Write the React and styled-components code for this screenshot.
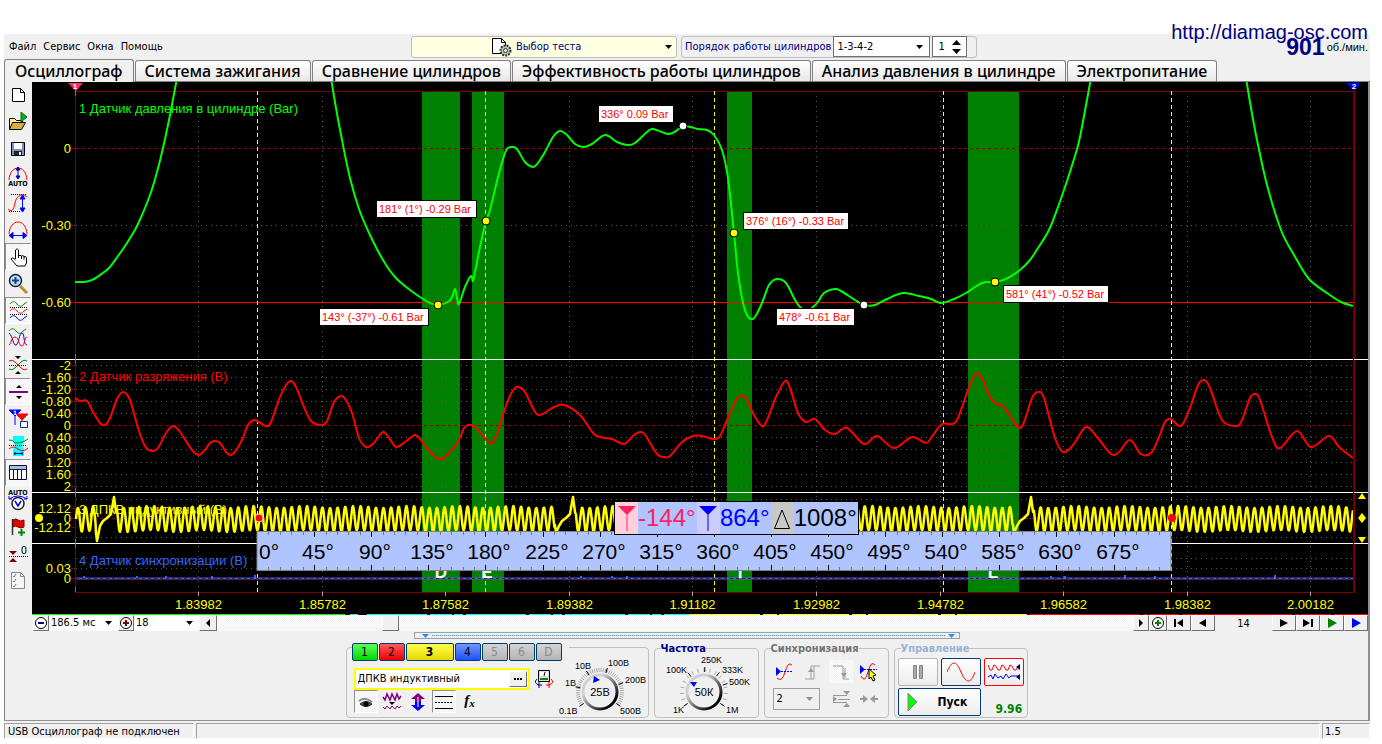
//react and styled components
import { useState } from "react";
import styled, { createGlobalStyle, css } from "styled-components";

const uiFont = `"DejaVu Sans Condensed", "DejaVu Sans", "Noto Sans", sans-serif`;
const plotFont = `"Liberation Sans", "DejaVu Sans", sans-serif`;

//#### PLOT DATA ####
const pressure = [
  [[75, 282], [84, 282], [92, 280], [100, 275], [109, 268], [118, 256], [127, 243], [138, 224], [150, 195], [157, 172], [163, 148], [170, 115], [177, 78]],
  [[331, 78], [336, 108], [342, 140], [350, 178], [359, 209], [370, 235], [383, 260], [395, 277], [410, 290], [423, 299], [430, 303], [438, 305], [448, 302], [452, 297], [455, 289], [457, 298], [459, 304], [465, 287], [471, 276], [473, 281], [476, 267], [480, 247], [486, 221], [490, 210], [498, 177], [505, 153], [508, 148], [512, 147], [517, 149], [525, 162], [533, 167], [538, 163], [545, 152], [553, 137], [560, 131], [567, 135], [575, 144], [583, 147], [592, 144], [605, 135], [617, 142], [627, 145], [635, 143], [647, 132], [653, 129], [668, 134], [676, 131], [683, 126], [690, 127], [698, 129], [707, 130], [714, 135], [722, 150], [728, 178], [734, 233], [738, 273], [743, 303], [747, 315], [751, 319], [755, 317], [762, 303], [769, 285], [777, 279], [786, 283], [794, 298], [800, 307], [807, 311], [813, 307], [818, 302], [824, 293], [835, 289], [841, 291], [855, 300], [864, 305], [875, 305], [887, 299], [903, 293], [919, 296], [931, 299], [941, 303], [954, 299], [966, 293], [982, 283], [995, 282], [1006, 279], [1020, 270], [1030, 260], [1038, 248], [1049, 230], [1058, 207], [1066, 184], [1074, 159], [1080, 137], [1091, 78]],
  [[1246, 78], [1251, 108], [1257, 140], [1267, 185], [1281, 230], [1294, 255], [1309, 279], [1327, 293], [1341, 302], [1353, 306]],
];

const vacuum = [
  [75, 398], [80, 401], [87, 401], [93, 412], [100, 423], [105, 425], [110, 418], [117, 399], [123, 392], [130, 400], [138, 428], [145, 446], [152, 451], [158, 448], [166, 433], [173, 426], [180, 432], [192, 450], [199, 455], [205, 450], [210, 443], [215, 441], [220, 443], [227, 453], [233, 454], [242, 440], [248, 425], [254, 420], [259, 422], [266, 426], [271, 422], [280, 397], [286, 385], [291, 381], [296, 387], [304, 407], [311, 421], [321, 425], [327, 421], [334, 402], [341, 396], [346, 400], [352, 413], [359, 438], [366, 447], [373, 444], [383, 432], [389, 438], [396, 447], [405, 442], [415, 435], [421, 440], [429, 451], [439, 459], [446, 456], [459, 440], [464, 428], [471, 425], [479, 431], [490, 443], [496, 436], [507, 403], [514, 389], [519, 387], [525, 392], [534, 410], [540, 415], [554, 407], [564, 405], [580, 415], [593, 433], [600, 437], [612, 439], [624, 444], [634, 435], [641, 432], [646, 436], [657, 454], [664, 457], [670, 456], [682, 442], [693, 436], [702, 436], [714, 439], [720, 436], [727, 420], [736, 400], [742, 396], [746, 398], [754, 415], [762, 426], [767, 420], [776, 397], [785, 381], [790, 388], [798, 413], [806, 422], [815, 419], [825, 430], [835, 434], [847, 428], [864, 444], [877, 436], [894, 448], [912, 437], [926, 443], [933, 435], [942, 424], [952, 424], [958, 418], [968, 390], [974, 376], [978, 374], [982, 378], [990, 397], [996, 404], [1003, 406], [1018, 427], [1024, 422], [1032, 398], [1038, 392], [1044, 398], [1055, 438], [1063, 452], [1073, 445], [1086, 427], [1097, 437], [1111, 454], [1119, 452], [1130, 440], [1141, 454], [1151, 453], [1159, 437], [1165, 422], [1171, 419], [1181, 426], [1190, 408], [1198, 385], [1204, 380], [1210, 388], [1222, 420], [1236, 426], [1242, 420], [1250, 398], [1255, 394], [1260, 400], [1272, 437], [1280, 448], [1297, 431], [1311, 447], [1329, 436], [1339, 447], [1353, 458],
];

const smooth = (pts) => {
  let d = `M${pts[0][0]} ${pts[0][1]}`;
  for (let i = 0; i < pts.length - 1; i++) {
    const a = pts[i - 1] || pts[i];
    const b = pts[i];
    const c = pts[i + 1];
    const e = pts[i + 2] || c;
    const n = (v) => v.toFixed(1);
    d += `C${n(b[0] + (c[0] - a[0]) / 6)} ${n(b[1] + (c[1] - a[1]) / 6)} ${n(c[0] - (e[0] - b[0]) / 6)} ${n(c[1] - (e[1] - b[1]) / 6)} ${c[0]} ${c[1]}`;
  }
  return d;
};

//crank sensor: toothed wheel wave with the missing tooth every 60 teeth
const crank = () => {
  const gaps = [96, 555, 1013];
  let d = "";
  for (let x = 76; x <= 1353; x += 0.5) {
    const gap = gaps.find((g) => x >= g && x < g + 21);
    if (gap !== undefined) {
      const low = gap === 96 ? 541 : 533;
      d += `L${gap} ${low - 8}L${gap + 1} ${low}L${gap + 4} 526L${gap + 7} 521L${gap + 11} 518L${gap + 15} 514L${gap + 18} 497L${gap + 20} 512`;
      x = gap + 20.5;
      continue;
    }
    const amp = 12 + Math.sin(x * 0.7);
    const y = 519 - amp * Math.sin(((x - 76) / 7.64) * Math.PI * 2);
    d += `${d ? "L" : "M"}${x} ${y.toFixed(1)}`;
  }
  return d;
};

const times = ["1.83982", "1.85782", "1.87582", "1.89382", "1.91182", "1.92982", "1.94782", "1.96582", "1.98382", "2.00182"];
const timeX = (i) => Math.round(198 + i * 123.6) + 0.5;
const bands = [[422, 38], [472, 32], [727, 25], [968, 51]];
const yLabels = [
  ["0", 148], ["-0.30", 225], ["-0.60", 302],
  ["-2", 365], ["-1.60", 377], ["-1.20", 389], ["-0.80", 401], ["-0.40", 413], ["0", 425],
  ["0.40", 437], ["0.80", 449], ["1.20", 462], ["1.60", 474], ["2", 486],
  ["12.12", 508], ["0", 518], ["-12.12", 527],
  ["0.03", 568], ["0", 578],
];
const gridY = [225, 365, 377, 389, 401, 413, 437, 449, 462, 474, 486, 499, 537, 558, 568];
const callouts = [
  { x: 598, y: 105, w: 76, text: "336° 0.09 Bar" },
  { x: 376, y: 200, w: 101, text: "181° (1°) -0.29 Bar" },
  { x: 319, y: 308, w: 110, text: "143° (-37°) -0.61 Bar" },
  { x: 743, y: 212, w: 106, text: "376° (16°) -0.33 Bar" },
  { x: 776, y: 308, w: 79, text: "478° -0.61 Bar" },
  { x: 1003, y: 285, w: 106, text: "581° (41°) -0.52 Bar" },
];
const points = [
  [683, 126, "#fff"], [864, 305, "#fff"], [438, 305, "#ff0"],
  [486, 221, "#ff0"], [734, 233, "#ff0"], [995, 282, "#ff0"],
];

const Chart = () => (
  <ChartSvg viewBox="32 82 1336 533" role="img" aria-label="Осциллограмма">
    <rect x="32" y="82" width="1336" height="533" fill="#000" />
    {bands.map(([x, w]) => (
      <rect key={x} x={x} y="92" width={w} height="500" fill="#008000" />
    ))}
    <g stroke="#5a5a5a" strokeDasharray="1 4" shapeRendering="crispEdges">
      {times.map((t, i) => (
        <path key={t} d={`M${timeX(i)} 96V592`} />
      ))}
      {gridY.map((y) => (
        <path key={y} d={`M76 ${y}.5H1353`} />
      ))}
    </g>
    <g stroke="#8c0000" strokeDasharray="3 3" shapeRendering="crispEdges">
      <path d="M70 148.5H1353M70 425.5H1353M70 518.5H1353" />
    </g>
    <g stroke="#800000" shapeRendering="crispEdges">
      <path d="M75.5 88V592.5H1354.5V91.5H75.5" fill="none" />
      {yLabels.map(([t, y]) => (
        <path key={`${t}${y}`} d={`M71 ${y}.5H75`} />
      ))}
    </g>
    <path d="M75 302.5H1354" stroke="#f00" />
    <g stroke="#ff0" strokeDasharray="4 3" shapeRendering="crispEdges">
      <path d="M257.5 91V592M485.5 91V592M714.5 91V592M943.5 91V592M1171.5 91V592" />
    </g>
    <path d="M32 359.5H1368M32 492.5H1368M32 543.5H1368" stroke="#fff" shapeRendering="crispEdges" />

    <g fontSize="13">
      <text x="79" y="113" fill="#0f0">1 Датчик давления в цилиндре (Bar)</text>
      <text x="79" y="381" fill="#f00">2 Датчик разряжения (В)</text>
      <text x="79" y="514" fill="#ff0">3 ДПКВ индуктивный (В)</text>
      <text x="79" y="565" fill="#36f">4 Датчик синхронизации (В)</text>
    </g>
    <g fill="#ff0" fontSize="13" textAnchor="end">
      {yLabels.map(([t, y]) => (
        <text key={`${t}${y}`} x="71" y={y + 5}>{t}</text>
      ))}
    </g>
    <g fill="#ff0" fontSize="13" textAnchor="middle">
      {times.map((t, i) => (
        <text key={t} x={timeX(i)} y="609">{t}</text>
      ))}
    </g>
    <path d={times.map((t, i) => `M${timeX(i)} 592V596`).join("")} stroke="#aaa" />

    <g fill="none" strokeWidth="2">
      {pressure.map((p) => (
        <path key={p[0][0]} d={smooth(p)} stroke="#0f0" />
      ))}
      <path d={smooth(vacuum)} stroke="#f00" />
      <path d={crank()} stroke="#ff0" strokeWidth="2.5" strokeLinejoin="round" />
      <path d="M76 578.5H1353" stroke="#36f" />
      <path d="M84 578V576M137 578V576M166 578V576M212 578V576M255 578V575M581 578V576M612 578V576M627 578V576M1051 578V576M1065 578V576M1125 578V575M1155 578V576M1275 578V575" stroke="#36f" />
    </g>
    <path d="M76 578.5H1353" stroke="#8c0000" strokeDasharray="3 3" shapeRendering="crispEdges" />
    <g fill="#fff" fontSize="17" fontWeight="700" textAnchor="middle">
      <text x="441" y="578">D</text>
      <text x="487" y="578">E</text>
      <text x="740" y="578">I</text>
      <text x="993" y="578">L</text>
    </g>
    {points.map(([x, y, c]) => (
      <circle key={x} cx={x} cy={y} r="4" fill={c} stroke="#000" />
    ))}
    <circle cx="39" cy="518" r="4" fill="#ff0" />
    <circle cx="259" cy="518" r="4" fill="#f00" stroke="#fcc" />
    <circle cx="1172" cy="518" r="4" fill="#f00" />
    <path d="M1358 499H1366L1362 493ZM1362 513L1366 518L1362 523L1358 518ZM1358 537H1366L1362 543Z" fill="#ff0" />

    <path d="M75.5 88V96M75.5 354V364M75.5 488V497M75.5 539V548M75.5 587V592" stroke="#ff2a68" />
    <path d="M1353.5 88V592" stroke="#00f" />
    <path d="M68 83H83L76 91Z" fill="#ff2a68" />
    <path d="M1346 83H1361L1354 91Z" fill="#00f" />
    <g fill="#fff" fontSize="8" fontWeight="700" textAnchor="middle">
      <text x="75" y="89">1</text>
      <text x="1354" y="89">2</text>
    </g>

    {/* memory map under the plot */}
    <g shapeRendering="crispEdges">
      <path d="M32 614.5H345" stroke="#0f0" />
      <path d="M350 614.5H358M367 614.5H690" stroke="#0ff" strokeDasharray="60 3 22 2 9 3" />
      <path d="M690 614.5H1027" stroke="#ff0" strokeDasharray="70 3 14 2" />
      <path d="M1030 614.5H1368" stroke="#f00" strokeDasharray="110 3 4 2 30 3" />
    </g>

    {/* degree ruler */}
    <rect x="257" y="531.5" width="914" height="39" fill="#b0c4ff" stroke="#808080" />
    {Array.from({ length: 79 }, (_, i) => i + 1).map((i) => {
      const x = Math.round(257 + i * 11.42) + 0.5;
      const big = i % 5 === 0;
      const h = big ? 5 : 3;
      return <path key={i} d={`M${x} 532V${532 + h}M${x} 570V${570 - h}`} stroke={big ? "#000" : "#777"} />;
    })}
    <g fontSize="21" textAnchor="middle">
      <text x="269" y="559">0°</text>
      {Array.from({ length: 15 }, (_, i) => i + 1).map((i) => (
        <text key={i} x={Math.round(257 + i * 57.1) + 4} y="559">{i * 45}°</text>
      ))}
    </g>
  </ChartSvg>
);

//#### TOOLBAR ICONS (24x24) ####
const wave = "c2-3 5-3 7 0s5 3 7 0";
const tools = [
  { name: "Новый", art: <path d="M6.500 5.500h8l4 4v9h-12zM14.500 5.500v4h4" fill="#fff" stroke="#000" /> },
  {
    name: "Открыть",
    art: (
      <>
        <path d="M3.500 19.500v-11h5l2 2h6v3" fill="#fff08a" stroke="#000" />
        <path d="M3.500 19.500l3-7h13l-4 7z" fill="#d9ae45" stroke="#000" />
        <path d="M15 2v10l6-5z" fill="#00b800" stroke="#063" />
      </>
    ),
  },
  {
    name: "Сохранить",
    art: (
      <>
        <path d="M5.500 5.500h13v13h-13z" fill="#7d8fc0" stroke="#000" />
        <path d="M8 6h8v6H8z" fill="#fff" />
        <path d="M8 14h8v4H8z" fill="#222" />
        <path d="M13 15h2v3h-2z" fill="#fff" />
      </>
    ),
  },
  {
    name: "Автомасштаб",
    art: (
      <>
        <path d="M3 16C4 0 20 0 21 16" fill="none" stroke="#f00" />
        <path d="M12 4v10M10 6l2-3 2 3zM10 12l2 3 2-3z" fill="#00a" stroke="#00a" />
        <text x="12" y="22" fontSize="7" fontWeight="700" textAnchor="middle">AUTO</text>
      </>
    ),
  },
  {
    name: "Масштаб по вертикали",
    art: (
      <>
        <path d="M5 3.500h15M3 20.500h12" stroke="#000" strokeDasharray="1 1" />
        <path d="M2 18c4 4 6 0 7-6S15 1 21 6" fill="none" stroke="#f00" />
        <path d="M16.500 7v11M14 8l2.500-4L19 8zM14 17l2.500 4 2.500-4z" fill="#00f" stroke="#00f" />
      </>
    ),
  },
  {
    name: "Масштаб по горизонтали",
    art: (
      <>
        <path d="M3 16C4 0 20 0 21 16" fill="none" stroke="#f00" />
        <path d="M4 17.500h16M7 14.500l-4 3 4 3zM17 14.500l4 3-4 3z" fill="#00f" stroke="#00f" />
      </>
    ),
  },
  {
    name: "Рука",
    on: true,
    art: <path d="M9.500 14V5q1.500-2.500 3 0v6q1.500-1.500 3 0q1.500-1 2.500.500q2-.500 2.500 1.500v5l-1.500 3h-8l-6-7q1-2.500 4.500 1M12.500 10v3M15.500 11v3M18 11.500v3" fill="#fff" stroke="#000" />,
  },
  {
    name: "Лупа",
    art: (
      <>
        <path d="M14 14l7 7" stroke="#b98d2f" strokeWidth="3" />
        <circle cx="9.500" cy="8.500" r="6" fill="#bfe0fa" stroke="#123" strokeWidth="1.500" />
        <path d="M9.500 5v7M6 8.500h7" stroke="#14418c" strokeWidth="2" />
      </>
    ),
  },
  {
    name: "Каналы раздельно",
    on: true,
    art: (
      <>
        <path d={`M4 5${wave}l3-2`} fill="none" stroke="#080" />
        <path d={`M4 12${wave}l3-2`} fill="none" stroke="#f00" />
        <path d={`M4 19${wave}l3-2`} fill="none" stroke="#00f" />
        <path d="M4 8.500h18M4 15.500h18" stroke="#000" strokeDasharray="1 1" />
      </>
    ),
  },
  {
    name: "Каналы вместе",
    art: (
      <>
        <path d={`M3 5${wave}l3-2`} fill="none" stroke="#080" />
        <path d="M3 7C7 10 7 20 10 19S13 7 16 7s1 12 5 12" fill="none" stroke="#00f" />
        <path d="M3 19C5 19 5 11 9 11s4 10 7 9S18 12 21 11" fill="none" stroke="#f00" />
      </>
    ),
  },
  {
    name: "Совместить",
    art: (
      <>
        <path d="M3 8q3-2 6 1t6 6 6 1" fill="none" stroke="#f00" />
        <path d="M3 16q3 2 6-1t6-6 6-1" fill="none" stroke="#080" />
        <path d="M3 12.500h18" stroke="#000" strokeDasharray="1 1" />
        <path d="M9 3h6l-3 3zM9 21h6l-3-3z" />
      </>
    ),
  },
  {
    name: "Разделитель",
    on: true,
    art: (
      <>
        <path d="M3 12h19" stroke="#800080" strokeWidth="2" />
        <path d="M10 8h6l-3-3zM10 16h6l-3 3z" />
      </>
    ),
  },
  {
    name: "Маркеры",
    art: (
      <>
        <path d="M10 7h12l-6 6zM16 10v9" fill="#f00" stroke="#f00" />
        <path d="M3 3h12L9 9zM9 8v10" fill="#00f" stroke="#00f" />
        <path d="M14.500 14.500h7v6h-7z" fill="#fff" stroke="#039" />
        <text x="9" y="8" fontSize="6" fontWeight="700" fill="#fff" textAnchor="middle">1</text>
      </>
    ),
  },
  {
    name: "Область",
    art: (
      <>
        <path d="M7 2h11v5l-2 5 2 4v6H7v-6l2-4-2-5z" fill="#0ff" />
        <path d="M3 6q4 0 5 2t9 0l5-3" fill="none" stroke="#080" />
        <path d="M3 15q4-4 9 0t10-1" fill="none" stroke="#f00" />
        <path d="M3 11.500h18" stroke="#000" strokeDasharray="1 1" />
        <path d="M8 19.500h9M9 18v3M16 18v3" stroke="#009" />
      </>
    ),
  },
  {
    name: "Таблица",
    on: true,
    art: (
      <>
        <path d="M3.500 4.500h17v14h-17z" fill="#fff" stroke="#112" />
        <path d="M4 5h16v3H4z" fill="#9dbcf0" />
        <path d="M3 8.500h18M7.500 9v9M11.500 9v9M15.500 9v9" stroke="#112" />
      </>
    ),
  },
  {
    name: "Автоподстройка",
    art: (
      <>
        <text x="12" y="7" fontSize="7" fontWeight="700" textAnchor="middle">AUTO</text>
        <circle cx="12" cy="15.500" r="6" fill="#fff" stroke="#222" strokeWidth="1.500" />
        <path d="M3 11q9-6 18 0M3 8v3h3M21 8v3h-3" fill="none" stroke="#00f" />
        <path d="M9 13l3 5 3-5" fill="none" stroke="#00f" strokeWidth="1.500" />
      </>
    ),
  },
  {
    name: "Добавить метку",
    art: (
      <>
        <path d="M6.500 4v16" stroke="#333" strokeWidth="1.500" />
        <path d="M7 5q3-2 5 0t6 0v7q-3 2-6 0t-5 0z" fill="#e00000" stroke="#700" />
        <path d="M15.500 14v7M12 17.500h7" stroke="#080" strokeWidth="2" />
      </>
    ),
  },
  {
    name: "Обнулить",
    art: (
      <>
        <path d="M3 14.500h19" stroke="#000" strokeDasharray="1 1" />
        <path d="M3 9h8l-4 4zM3 20h8l-4-4z" fill="#800000" />
        <text x="18" y="12" fontSize="11" textAnchor="middle">0</text>
      </>
    ),
  },
  {
    name: "Отчёт",
    art: (
      <>
        <path d="M5.500 3.500h9l4 4v12h-13zM14.500 3.500v4h4" fill="#f6f6f6" stroke="#888" />
        <path d="M7 7l1 1 2-3M7 12l1 1 2-3M7 17l1 1 2-3" fill="none" stroke="#777" />
      </>
    ),
  },
];

const Caret = () => (
  <svg width="7" height="4" viewBox="0 0 7 4" aria-hidden="true">
    <path d="M0 0h7L3.500 4z" fill="currentColor" />
  </svg>
);

const Zoom = ({ color, plus }) => (
  <svg width="14" height="14" viewBox="0 0 14 14">
    <circle cx="7" cy="7" r="5.500" fill="#fff" stroke="#000" />
    <path d={plus ? "M4 7h6M7 4v6" : "M4 7h6"} stroke={color} strokeWidth="2" />
  </svg>
);

const Glyph = ({ d, color = "#000" }) => (
  <svg width="12" height="10" viewBox="0 0 12 10">
    <path d={d} fill={color} />
  </svg>
);

//round switch with its scale printed around it
const Knob = ({ label, value, width, cx, labels, pointer, ticks }) => (
  <KnobBox $w={width}>
    <svg width={width} height="68" viewBox={`0 0 ${width} 68`} aria-hidden="true">
      <defs>
        <linearGradient id={`rim${cx}`} x1="0" y1="0" x2="1" y2="1">
          <stop offset="0.300" stopColor="#d0d0d0" />
          <stop offset="0.850" stopColor="#000" />
        </linearGradient>
      </defs>
      {Array.from({ length: ticks }, (_, i) => {
        const a = ((-215 + (250 * i) / (ticks - 1)) * Math.PI) / 180;
        return (
          <path
            key={i}
            stroke="#aaa"
            d={`M${cx + 20 * Math.cos(a)} ${42 + 20 * Math.sin(a)}L${cx + 24 * Math.cos(a)} ${42 + 24 * Math.sin(a)}`}
          />
        );
      })}
      {labels.map(([t, x, y, a]) => {
        const r = (a * Math.PI) / 180;
        return (
          <g key={t}>
            <text x={x} y={y} fontSize="9">{t}</text>
            <path
              stroke="#000"
              d={`M${cx + 20 * Math.cos(r)} ${42 + 20 * Math.sin(r)}L${cx + 25 * Math.cos(r)} ${42 + 25 * Math.sin(r)}`}
            />
          </g>
        );
      })}
      <circle cx={cx} cy="42" r="17" fill="#f0f0f0" stroke={`url(#rim${cx})`} strokeWidth="3" />
      <path d={pointer} fill="#00f" />
      <text x={cx} y="46" fontSize="11" textAnchor="middle">{value}</text>
    </svg>
    <input type="range" min="0" max="5" defaultValue="3" aria-label={label} />
  </KnobBox>
);

const tabs = ["Осциллограф", "Система зажигания", "Сравнение цилиндров", "Эффективность работы цилиндров", "Анализ давления в цилиндре", "Электропитание"];
const channels = [
  { n: "1", from: "#5cff5c", to: "#00d800" },
  { n: "2", from: "#ff5c5c", to: "#e80000" },
  { n: "3", from: "#ffff50", to: "#e6d800", wide: true },
  { n: "4", from: "#6c98ff", to: "#1e50ff" },
  { n: "5", from: "#d4d4d4", to: "#b4b4b4", off: true },
  { n: "6", from: "#d4d4d4", to: "#b4b4b4", off: true },
  { n: "D", from: "#d4d4d4", to: "#b4b4b4", off: true },
];

const App = () => {
  const [tab, setTab] = useState(0);
  const [sensor, setSensor] = useState("ДПКВ индуктивный");

  return (
    <Page>
      <GlobalStyle />
      <Window>
        <TopBar>
          <Menu>
            <button>Файл</button>
            <button>Сервис</button>
            <button>Окна</button>
            <button>Помощь</button>
          </Menu>
          <TestButton>
            <svg width="22" height="20" viewBox="0 0 22 20">
              <path d="M1.500 1.500h9l4 4v11h-13zM10.500 1.500v4h4" fill="#fff" stroke="#000" />
              <circle cx="14.500" cy="13.500" r="5" fill="#b4c8b4" stroke="#333" strokeWidth="2" strokeDasharray="2 1" />
              <circle cx="14.500" cy="13.500" r="2" fill="#fff" stroke="#333" />
            </svg>
            <span>Выбор теста</span>
            <Caret />
          </TestButton>
          <OrderGroup>
            <label htmlFor="order">Порядок работы цилиндров</label>
            <SelectBox $w="97px" $h="21px">
              <select id="order" defaultValue="1-3-4-2">
                <option>1-3-4-2</option>
                <option>1-2-4-3</option>
              </select>
              <Caret />
            </SelectBox>
            <SpinBox>
              <input type="number" defaultValue="1" aria-label="Номер цилиндра" />
              <svg width="9" height="14" viewBox="0 0 9 14">
                <path d="M0 5h9L4.500 0zM0 9h9l-4.500 5z" />
              </svg>
            </SpinBox>
          </OrderGroup>
          <Rpm>
            <strong>901</strong>
            <span>об./мин.</span>
          </Rpm>
          <SiteLink href="http://diamag-osc.com">http://diamag-osc.com</SiteLink>
        </TopBar>

        <Tabs role="tablist">
          {tabs.map((t, i) => (
            <Tab key={t} role="tab" aria-selected={tab === i} $active={tab === i} onClick={() => setTab(i)}>
              {t}
            </Tab>
          ))}
        </Tabs>

        <Body>
          <ToolBar>
            {tools.map(({ name, on, art }) => (
              <Tool key={name} aria-label={name} $on={on}>
                <svg width="24" height="24" viewBox="0 0 24 24">{art}</svg>
              </Tool>
            ))}
          </ToolBar>
          <Main>
            <Scope>
              <Chart />
              {callouts.map((c) => (
                <Callout key={c.text} $x={c.x} $y={c.y} $w={c.w}>{c.text}</Callout>
              ))}
              <Readout>
                <Mark $bg="#ffd0dc">
                  <svg width="18" height="26" viewBox="0 0 18 26">
                    <path d="M0 1h18L9 10zM8.500 8h1v18h-1z" fill="#ff2060" />
                  </svg>
                </Mark>
                <Value $c="#ff2060">-144°</Value>
                <Mark $bg="#ccccff">
                  <svg width="18" height="26" viewBox="0 0 18 26">
                    <path d="M0 1h18L9 10zM8.500 8h1v18h-1z" fill="#00f" />
                  </svg>
                </Mark>
                <Value $c="#0000ff">864°</Value>
                <Mark $bg="#c8c8c8">
                  <svg width="18" height="26" viewBox="0 0 18 26">
                    <path d="M1.500 23.500L9 5l7.500 18.500z" fill="none" stroke="#000" />
                  </svg>
                </Mark>
                <Value $c="#000">1008°</Value>
              </Readout>
            </Scope>
            <ScrollRow>
              <Key $w="16px" aria-label="Уменьшить"><Zoom color="#000080" /></Key>
              <SelectBox $w="69px" $flat>
                <select aria-label="Развёртка" defaultValue="186.5 мс">
                  <option>186.5 мс</option>
                </select>
                <Caret />
              </SelectBox>
              <Key $w="16px" aria-label="Увеличить"><Zoom color="#800000" plus /></Key>
              <SelectBox $w="65px" $flat>
                <select aria-label="Масштаб" defaultValue="18">
                  <option>18</option>
                </select>
                <Caret />
              </SelectBox>
              <Key $w="18px" aria-label="Влево"><Glyph d="M8 1v8L4 5z" /></Key>
              <Track><Thumb /></Track>
              <Key $w="16px" aria-label="Вправо"><Glyph d="M4 1v8l4-4z" /></Key>
              <Key $w="18px" aria-label="Добавить"><Zoom color="#008000" plus /></Key>
              <Key $w="24px" aria-label="В начало"><Glyph d="M1 1h2v8H1zM10 1v8L4 5z" /></Key>
              <Key $w="24px" aria-label="Назад"><Glyph d="M9 1v8L2 5z" /></Key>
              <Frame>14</Frame>
              <Key $w="24px" aria-label="Вперёд"><Glyph d="M2 1v8l8-4z" /></Key>
              <Key $w="24px" aria-label="В конец"><Glyph d="M1 1v8l7-4zM9 1h2v8H9z" /></Key>
              <Key $w="24px" aria-label="Проиграть"><Glyph d="M2 0v10l9-5z" color="#008000" /></Key>
              <Key $w="24px" aria-label="Повтор"><Glyph d="M2 0v10l9-5z" color="#0000ff" /></Key>
            </ScrollRow>
          </Main>
        </Body>

        <Bottom>
          <Splitter>
            <Caret />
            <i />
            <Caret />
          </Splitter>
          <Panels>
            <ChannelPanel>
              <div>
                <Channels>
                  {channels.map((c) => (
                    <Channel key={c.n} disabled={c.off} $from={c.from} $to={c.to} $wide={c.wide}>{c.n}</Channel>
                  ))}
                </Channels>
                <SensorRow>
                  <SensorField>
                    <input aria-label="Датчик" value={sensor} onChange={(e) => setSensor(e.target.value)} />
                    <Key $w="18px" aria-label="Выбрать датчик">
                      <svg width="8" height="2"><path d="M0 0h2v2H0zM3 0h2v2H3zM6 0h2v2H6z" /></svg>
                    </Key>
                  </SensorField>
                  <IconKey aria-label="Обмен">
                    <svg width="20" height="20" viewBox="0 0 20 20">
                      <path d="M4.500 1.500h11v11h-11z" fill="#ddd" stroke="#000" />
                      <path d="M6 3h8v4H6z" fill="#fff" />
                      <path d="M6 10h8" stroke="#080" strokeWidth="2" />
                      <path d="M10 7l1-4" stroke="#000" />
                      <path d="M3 10q-4 4 2 6M8 16H4M5 13v6" stroke="#000080" fill="none" />
                      <path d="M17 10q4 4-2 6M12 16h4M15 13v6" stroke="#f00" fill="none" />
                    </svg>
                  </IconKey>
                </SensorRow>
                <SensorRow>
                  <IconKey $on aria-label="Показать">
                    <svg width="18" height="18" viewBox="0 0 18 18">
                      <path d="M2 8q6-5 13 1" fill="none" stroke="#888" strokeWidth="2" />
                      <path d="M3 11q6-5 12 0-6 5-12 0z" fill="#654" stroke="#222" />
                      <circle cx="9" cy="11" r="2.500" />
                    </svg>
                  </IconKey>
                  <IconKey aria-label="Фильтр">
                    <svg width="20" height="20" viewBox="0 0 20 20">
                      <path d="M1 5l2 3 2-6 3 6 2-6 3 6 2-6 2 5 2-3" fill="none" stroke="#800080" strokeWidth="1.500" />
                      <path d="M1 15l2 2 2-3 3 3 2-3 3 3 2-3 2 2 2-2" fill="none" stroke="#800080" />
                      <path d="M7 10h6l-3 3z" />
                    </svg>
                  </IconKey>
                  <IconKey aria-label="Инвертировать">
                    <svg width="18" height="20" viewBox="0 0 18 20">
                      <path d="M9 1l7 6h-4v3H6V7H2z" fill="#800080" />
                      <path d="M9 19l7-6h-4v-3H6v3H2z" fill="#00f" />
                      <path d="M9 5v10" stroke="#fff" />
                    </svg>
                  </IconKey>
                  <IconKey $on aria-label="Уровни">
                    <svg width="20" height="18" viewBox="0 0 20 18">
                      <path d="M1 3.500h18M1 15.500h18" stroke="#000" />
                      <path d="M1 9.500h18" stroke="#000" strokeDasharray="2 1" />
                    </svg>
                  </IconKey>
                  <Formula aria-label="Формула">f<sub>x</sub></Formula>
                </SensorRow>
              </div>
              <Knob
                label="Диапазон"
                value="25В"
                width={92}
                cx={44}
                ticks={46}
                pointer="M38 26l6 4-7 3z"
                labels={[["0.1В", 3, 64, 145], ["1В", 9, 36, 192], ["10В", 19, 19, 237], ["100В", 52, 16, 287], ["200В", 69, 33, 338], ["500В", 64, 64, 35]]}
              />
            </ChannelPanel>
            <Panel $w="105px">
              <Legend $c="#000080">Частота</Legend>
              <Knob
                label="Частота"
                value="50К"
                width={98}
                cx={47}
                ticks={17}
                pointer="M33 32l7 0-3 5z"
                labels={[["1K", 16, 63, 145], ["100K", 9, 23, 230], ["250K", 44, 13, 272], ["333K", 65, 23, 308], ["500K", 72, 35, 340], ["1M", 69, 63, 35]]}
              />
            </Panel>
            <Panel $w="125px">
              <Legend $c="#747474">Синхронизация</Legend>
              <SyncGrid>
                <IconKey aria-label="Авто">
                  <svg width="20" height="20" viewBox="0 0 20 20">
                    <path d="M2 16q5 5 8-6t7-7" fill="none" stroke="#f00" />
                    <path d="M6 9.500h11" stroke="#00f" strokeDasharray="2 1" />
                    <path d="M1 5v9l5-4.500z" fill="#00f" />
                  </svg>
                </IconKey>
                <IconKey disabled aria-label="По фронту">
                  <svg width="20" height="20" viewBox="0 0 20 20">
                    <path d="M2 17h6V4h9M8 17h3V4" fill="none" stroke="#a0a0a0" />
                    <path d="M5 10l3-4 3 4z" fill="#999" />
                  </svg>
                </IconKey>
                <IconKey disabled $soft aria-label="По спаду">
                  <svg width="20" height="20" viewBox="0 0 20 20">
                    <path d="M2 4h10v13h6M14 6v10" fill="none" stroke="#999" />
                    <path d="M10 11l3 4 3-4z" fill="#999" />
                  </svg>
                </IconKey>
                <IconKey aria-label="Уровень">
                  <svg width="20" height="20" viewBox="0 0 20 20">
                    <path d="M2 14q4 8 7-4t7-7" fill="none" stroke="#f00" />
                    <path d="M5 7.500h13" stroke="#00f" strokeDasharray="2 1" />
                    <path d="M1 3v9l5-4.500z" fill="#00f" />
                    <path d="M10 7l7 6-3 1 2 4-2 1-2-4-2 2z" fill="#ff0" stroke="#000" />
                  </svg>
                </IconKey>
                <SelectBox $w="47px" $h="22px" $off>
                  <select disabled aria-label="Канал синхронизации" defaultValue="2">
                    <option>2</option>
                  </select>
                  <Caret />
                </SelectBox>
                <IconKey disabled aria-label="По уровням">
                  <svg width="20" height="20" viewBox="0 0 20 20">
                    <path d="M2 6.500h14M2 13.500h14M7 10.500h12" stroke="#999" />
                    <path d="M12 2h7l-3 4zM12 18h7l-3-4zM2 7v6l4-3z" fill="#999" />
                  </svg>
                </IconKey>
                <IconKey disabled aria-label="По центру">
                  <svg width="20" height="20" viewBox="0 0 20 20">
                    <path d="M1 9h3V6l5 4-5 4v-3H1zM19 9h-3V6l-5 4 5 4v-3h3z" fill="#999" />
                  </svg>
                </IconKey>
              </SyncGrid>
            </Panel>
            <Panel $w="134px">
              <Legend $c="#9ab4d4">Управление</Legend>
              <Controls>
                <Control $b="#b4b4b4" disabled aria-label="Пауза">
                  <svg width="12" height="16"><path d="M1.500 1.500h3v13h-3zM7.500 1.500h3v13h-3z" fill="#aaa" stroke="#888" /></svg>
                </Control>
                <Control $b="#003c74" aria-label="Однократно">
                  <svg width="28" height="20" viewBox="0 0 28 20"><path d="M0 10C5-2 9-2 14 10s10 12 14 0" fill="none" stroke="#f00" /></svg>
                </Control>
                <Control $b="#ff0000" aria-label="Непрерывно">
                  <svg width="34" height="20" viewBox="0 0 34 20">
                    <path d="M1 3l2 5h2l2-5 2 1 2 4h2l2-5 2 1 2 4h2l2-5 2 1 2 4h2l2-3" fill="none" stroke="#f00" />
                    <path d="M1 15l3-2 2 4 2-5 3 4 3-2 2 3 3-5 3 4 2-2h9" fill="none" stroke="#00f" />
                    <path d="M33 2v6l-4-3zM33 12v6l-4-3z" fill="#000080" />
                  </svg>
                </Control>
                <Control $b="#003c74" $start>
                  <svg width="11" height="20" viewBox="0 0 11 20"><path d="M1 1v18l9-9z" fill="#0f0" stroke="#888" /></svg>
                  <span>Пуск</span>
                </Control>
                <Version>9.96</Version>
              </Controls>
            </Panel>
          </Panels>
        </Bottom>

        <StatusBar>
          <span>USB Осциллограф не подключен</span>
          <span />
          <span>1.5</span>
        </StatusBar>
      </Window>
    </Page>
  );
};

//#### STYLES ####
const dither = "repeating-conic-gradient(#ffffff 0 25%, #f0f0f0 0 50%) 0 0 / 2px 2px";

const GlobalStyle = createGlobalStyle`
  * {
    box-sizing: border-box;
  }

  body {
    margin: 0;
    background: #fff;
    color: #000;
    font: 11px/14px ${uiFont};
  }

  button, input, select {
    margin: 0;
    padding: 0;
    border: 0;
    border-radius: 0;
    background: none;
    color: inherit;
    font: inherit;
  }

  svg {
    display: block;
    flex: none;
  }
`;

const Page = styled.div`
  padding: 34px 12px 4px 4px;
`;

const Window = styled.div`
  background: #f0f0f0;
`;

const TopBar = styled.header`
  position: relative;
  display: flex;
  align-items: center;
  height: 25px;
`;

const Menu = styled.nav`
  display: flex;
  gap: 7px;
  flex: 0 0 407px;
  padding-left: 5px;
`;

const TestButton = styled.button`
  display: flex;
  align-items: center;
  width: 266px;
  height: 22px;
  margin-right: 4px;
  padding: 0 4px 0 79px;
  gap: 3px;
  border: 1px solid #bdbdbd;
  border-radius: 3px;
  background: #ffffe1;
  color: #000080;

  span {
    flex: 1;
    text-align: left;
  }

  svg:last-child {
    color: #000;
  }
`;

const OrderGroup = styled.div`
  display: flex;
  align-items: center;
  gap: 2px;
  width: 296px;
  height: 22px;
  padding-left: 3px;
  border: 1px solid #bdbdbd;
  border-radius: 3px;

  label {
    color: #000080;
    white-space: nowrap;
  }
`;

const SelectBox = styled.div`
  position: relative;
  display: flex;
  flex: none;
  width: ${({ $w }) => $w};
  height: ${({ $h }) => $h || "16px"};
  border: ${({ $flat, $off }) => ($flat ? "0" : $off ? "1px solid #a0a0a0" : "1px solid #707070")};
  background: ${({ $off }) => ($off ? "#f0f0f0" : "#fff")};
  color: ${({ $off }) => ($off ? "#909090" : "#000")};

  select {
    width: 100%;
    padding-left: ${({ $flat }) => ($flat ? "2px" : "3px")};
    appearance: none;
    color: #000;
    opacity: 1;
  }

  svg {
    position: absolute;
    right: 6px;
    top: calc(50% - 2px);
    pointer-events: none;
  }
`;

const SpinBox = styled.div`
  display: flex;
  align-items: center;
  width: 35px;
  height: 21px;
  padding: 0 5px;
  border: 1px solid #707070;
  background: #fff;

  input {
    flex: 1;
    min-width: 0;
    appearance: textfield;
  }

  input::-webkit-inner-spin-button {
    display: none;
  }
`;

const Rpm = styled.div`
  display: flex;
  align-items: center;
  gap: 2px;
  margin-left: auto;
  padding-right: 2px;
  font: 11px/12px ${plotFont};

  strong {
    color: #000080;
    font-size: 23px;
  }
`;

const SiteLink = styled.a`
  position: absolute;
  right: 2px;
  top: -14px;
  color: #000080;
  font: 20px/24px ${plotFont};
  text-decoration: none;
`;

const Tabs = styled.div`
  display: flex;
  align-items: flex-end;
  gap: 1px;
  height: 23px;
  border-bottom: 1px solid #808080;
`;

const Tab = styled.button`
  height: 21px;
  padding: 0 9px;
  border: 1px solid #808080;
  border-bottom: 0;
  border-radius: 3px 3px 0 0;
  background: linear-gradient(#fff, #e8e8e8);
  font: 500 16px/20px "Noto Sans", sans-serif;
  white-space: nowrap;

  ${({ $active }) =>
    $active &&
    css`
      height: 23px;
      margin-bottom: -1px;
      padding: 0 10px;
      background: #f0f0f0;
    `}
`;

const Body = styled.div`
  display: flex;
  align-items: flex-start;
  border-left: 1px solid #808080;
  border-right: 2px solid #909090;
`;

const ToolBar = styled.div`
  display: flex;
  flex-direction: column;
  flex: 0 0 27px;
  margin-top: -1px;
`;

const Tool = styled.button`
  display: flex;
  align-items: center;
  justify-content: center;
  width: 26px;
  height: 27px;
  border: 1px solid transparent;

  ${({ $on }) =>
    $on &&
    css`
      border-color: #909090 #fff #fff #909090;
      background: ${dither};
    `}

  text {
    font-family: ${uiFont};
  }
`;

const Main = styled.main`
  flex: 1;
  min-width: 0;
`;

const Scope = styled.div`
  position: relative;
`;

const ChartSvg = styled.svg`
  width: 100%;
  height: auto;
  font-family: ${plotFont};
`;

const onScope = css`
  position: absolute;
  left: ${({ $x }) => (($x - 32) / 1336) * 100}%;
  top: ${({ $y }) => (($y - 82) / 533) * 100}%;
`;

const Callout = styled.span`
  ${onScope}
  width: ${({ $w }) => $w}px;
  height: 18px;
  padding-left: 2px;
  border: 1px solid #000;
  background: #fff;
  color: #f00;
  font: 11px/16px ${plotFont};
  white-space: nowrap;
`;

const Readout = styled.div.attrs({ $x: 614, $y: 501 })`
  ${onScope}
  display: flex;
  width: 245px;
  height: 34px;
  border: 1px solid #000;
  background: #b0c4ff;
`;

const Mark = styled.span`
  display: flex;
  align-items: center;
  justify-content: center;
  flex: 0 0 23px;
  background: ${({ $bg }) => $bg};
`;

const Value = styled.span`
  flex: 1 0 auto;
  color: ${({ $c }) => $c};
  font: 24px/31px ${plotFont};
`;

const ScrollRow = styled.div`
  display: flex;
  height: 17px;
  padding-left: 1px;
`;

const Key = styled.button`
  display: flex;
  align-items: center;
  justify-content: center;
  flex: 0 0 ${({ $w }) => $w};
  height: 16px;
  border: 1px solid;
  border-color: #fff #707070 #707070 #fff;
  background: #f0f0f0;
`;

const Track = styled.div`
  flex: 1;
  height: 16px;
  background: ${dither};
`;

const Thumb = styled.div`
  width: 17px;
  height: 16px;
  margin-left: 18%;
  border: 1px solid;
  border-color: #fff #707070 #707070 #fff;
  background: #f0f0f0;
`;

const Frame = styled.span`
  flex: 0 0 57px;
  line-height: 17px;
  text-align: center;
`;

const Bottom = styled.div`
  display: flex;
  flex-direction: column;
  align-items: center;
  height: 88px;
  border-left: 1px solid #808080;
  border-right: 2px solid #909090;
`;

const Splitter = styled.div`
  display: flex;
  align-items: center;
  justify-content: space-between;
  gap: 3px;
  width: 546px;
  height: 7px;
  margin-bottom: 3px;
  padding: 0 4px 0 7px;
  border: 1px solid #a0a0a0;
  color: #1e90ff;

  i {
    flex: 1;
    border-top: 1px dotted #1e90ff;
  }
`;

const Panels = styled.div`
  display: flex;
  align-items: flex-end;
  gap: 5px;
`;

const Panel = styled.fieldset`
  width: ${({ $w }) => $w};
  height: 76px;
  min-width: 0;
  margin: 0;
  padding: 0 2px;
  border: 1px solid #c0c0c0;
  border-radius: 4px;
`;

const Legend = styled.legend`
  height: 12px;
  margin-left: 4px;
  padding: 0;
  color: ${({ $c }) => $c};
  font-weight: 700;
  line-height: 14px;
`;

const ChannelPanel = styled.section`
  display: flex;
  width: 303px;
  height: 71px;
  padding-left: 5px;
  border: 1px solid #c0c0c0;
  border-radius: 4px;

  & > div:first-child {
    flex: 0 0 204px;
    min-width: 0;
  }
`;

const Channels = styled.div`
  display: flex;
  gap: 1px;
  width: 217px;
  margin: -5px 0 6px;
  background: #f0f0f0;
`;

const Channel = styled.button`
  width: ${({ $wide }) => ($wide ? "48px" : "26px")};
  height: 18px;
  border: 1px solid #003c74;
  border-radius: 2px;
  background: linear-gradient(${({ $from, $to }) => `${$from}, ${$to}`});
  color: ${({ disabled }) => (disabled ? "#8a8a8a" : "#000")};
  font-size: 12px;
  font-weight: ${({ $wide }) => ($wide ? 700 : 400)};
`;

const SensorRow = styled.div`
  display: flex;
  align-items: center;
  gap: 2px;
  height: 23px;
  padding-left: 2px;
`;

const SensorField = styled.div`
  display: flex;
  align-items: center;
  width: 178px;
  height: 22px;
  padding: 1px;
  border: 2px solid #ff0;
  background: #fff;

  input {
    flex: 1;
    min-width: 0;
    padding-left: 1px;
    outline: 0;
  }
`;

const IconKey = styled.button`
  display: flex;
  align-items: center;
  justify-content: center;
  width: 24px;
  height: 23px;
  border: 1px solid transparent;
  background: ${({ $soft }) => ($soft ? dither : "none")};

  ${({ $on }) =>
    $on &&
    css`
      border-color: #909090 #fff #fff #909090;
      background: ${dither};
    `}
`;

const Formula = styled.button`
  width: 24px;
  font: italic 700 15px/20px "Liberation Serif", serif;

  sub {
    font-size: 11px;
    vertical-align: -2px;
  }
`;

const KnobBox = styled.div`
  position: relative;
  width: ${({ $w }) => $w}px;
  height: 68px;

  svg {
    margin-top: 2px;
    overflow: visible;
    font-family: ${plotFont};
  }

  fieldset & svg {
    margin-top: -4px;
  }

  input {
    position: absolute;
    inset: 20px 24px 4px;
    width: 40px;
    opacity: 0;
  }
`;

const SyncGrid = styled.div`
  display: grid;
  grid-template-columns: repeat(4, 24px);
  justify-content: space-between;
  align-items: center;
  row-gap: 4px;
  padding: 6px 4px 0 6px;

  & > div {
    grid-column: span 2;
  }
`;

const Controls = styled.div`
  display: grid;
  grid-template-columns: repeat(3, 40px);
  gap: 2px 3px;
  padding: 4px 0 0 1px;
`;

const Control = styled.button`
  display: flex;
  align-items: center;
  justify-content: center;
  height: 28px;
  border: 1px solid ${({ $b }) => $b};
  border-radius: 2px;
  background: linear-gradient(#fff, #ececec);

  ${({ $start }) =>
    $start &&
    css`
      grid-column: span 2;
      justify-content: flex-start;
      padding-left: 8px;
      gap: 20px;
      font-size: 12px;
      font-weight: 700;
    `}
`;

const Version = styled.strong`
  align-self: end;
  padding-left: 12px;
  color: #008000;
  font-size: 12px;
`;

const StatusBar = styled.footer`
  display: flex;
  gap: 2px;
  height: 19px;
  padding-top: 2px;
  border-top: 1px solid #909090;

  span {
    padding: 1px 3px;
    border: 1px solid;
    border-color: #a0a0a0 #fff #fff #a0a0a0;
  }

  span:first-child {
    flex: 0 0 190px;
  }

  span:nth-child(2) {
    flex: 1;
  }

  span:last-child {
    flex: 0 0 48px;
    padding-left: 2px;
  }
`;

export default App;
